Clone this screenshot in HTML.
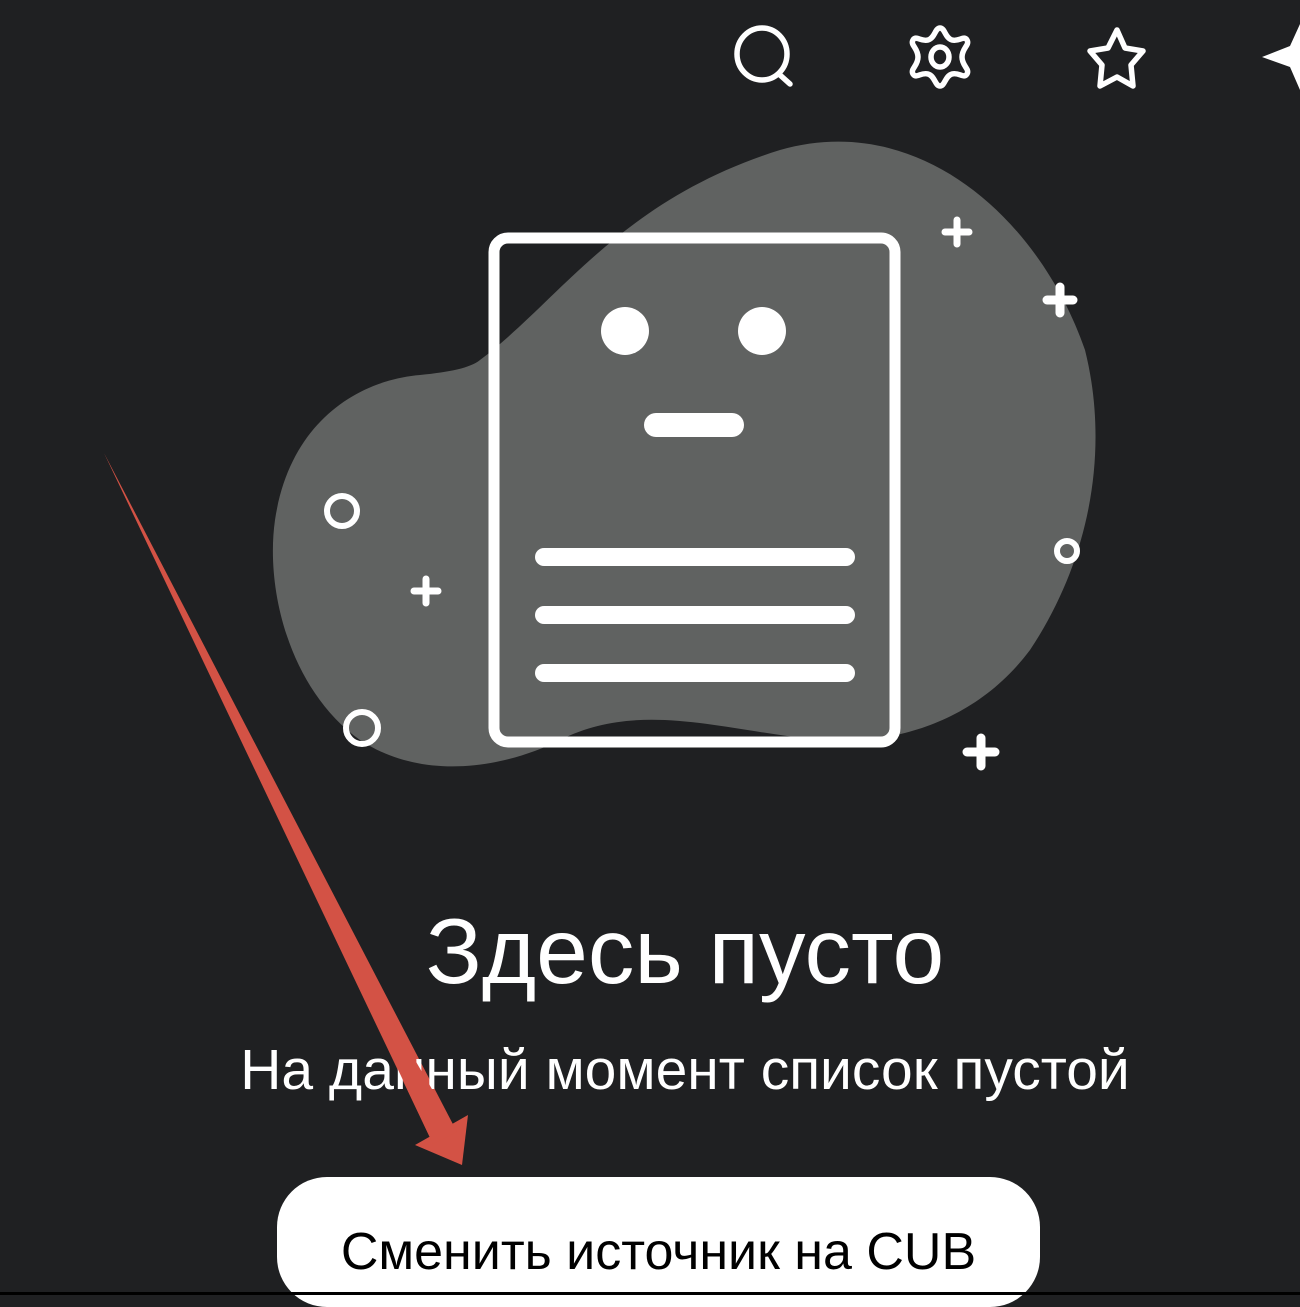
<!DOCTYPE html>
<html><head><meta charset="utf-8"><style>
html,body{margin:0;padding:0;background:#1f2022;width:1300px;height:1295px;overflow:hidden;font-family:"Liberation Sans","DejaVu Sans",sans-serif}
svg{position:absolute;left:0;top:0}
.t{position:absolute;left:0;width:1370px;text-align:center;color:#fff;white-space:nowrap}
.btn{position:absolute;left:277px;top:1177px;width:763px;height:130px;background:#fff;border-radius:50px}
.bl{position:absolute;left:0;top:1292px;width:1300px;height:3px;background:#000}
</style></head><body>
<svg width="1300" height="1295" viewBox="0 0 1300 1295">
<path fill="#606261" d="M480,360 C560,300 620,200 780,150 C920,110 1040,220 1085,350 C1110,450 1090,560 1030,650 C970,730 880,745 820,740 C720,730 640,700 560,740 C500,770 420,780 360,740 C290,690 265,590 275,520 C290,420 360,380 420,375 C450,372 470,368 480,360 Z"/>
<rect x="494" y="238" width="401" height="504" rx="14" fill="none" stroke="#fff" stroke-width="11"/>
<circle cx="625" cy="331" r="24" fill="#fff"/><circle cx="762" cy="331" r="24" fill="#fff"/>
<g stroke="#fff" stroke-linecap="round" fill="none">
<line x1="656" y1="425" x2="732" y2="425" stroke-width="24"/>
<line x1="544" y1="557" x2="846" y2="557" stroke-width="18"/>
<line x1="544" y1="615" x2="846" y2="615" stroke-width="18"/>
<line x1="544" y1="673" x2="846" y2="673" stroke-width="18"/>
<g stroke-width="7"><path d="M945 232h24M957 220v24"/><path d="M414 591h24M426 579v24"/></g>
<g stroke-width="9"><path d="M1047 300h26M1060 287v26"/><path d="M967 752h28M981 738v28"/></g>
<g stroke-width="6"><circle cx="342" cy="511" r="15"/><circle cx="1067" cy="551" r="10"/><circle cx="362" cy="728" r="16"/></g>
<g stroke-width="5.5" stroke-linejoin="round">
<ellipse cx="762" cy="54" rx="25" ry="26"/><line x1="780" y1="75" x2="790" y2="84"/>
<path d="M940 28c5 0 5 10 12 12c7 2 12-5 15 0c3 5-5 8-5 17c0 9 8 12 5 17c-3 5-8-2-15 0c-7 2-7 12-12 12c-5 0-5-10-12-12c-7-2-12 5-15 0c-3-5 5-8 5-17c0-9-8-12-5-17c3-5 8 2 15 0c7-2 7-12 12-12z"/>
<ellipse cx="940" cy="57" rx="9" ry="10"/>
<path d="M1117 30l8 18l18 3l-12 14l2 21l-16-9l-17 9l2-21l-12-14l18-3z"/>
</g>
</g>
<path fill="#fff" d="M1300 24L1290 46L1262 57L1290 67L1300 90Z"/>
<path fill="#d35245" d="M104 453L457 1132L433 1144Z"/>
<path fill="#d35245" d="M415 1145L468 1115L462 1165Z"/>
</svg>
<div class="t" style="top:898px;font-size:93px">Здесь пусто</div>
<div class="t" style="top:1037px;font-size:57px">На данный момент список пустой</div>
<svg width="1300" height="1295" style="pointer-events:none"><path fill="#d35245" d="M380 1000L457 1132L433 1144L370 1010Z"/></svg>
<div class="btn"></div>
<div class="t" style="left:277px;width:763px;top:1222px;font-size:52px;color:#000">Сменить источник на CUB</div>
<div class="bl"></div>
</body></html>
